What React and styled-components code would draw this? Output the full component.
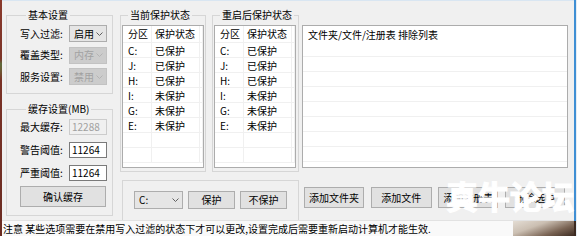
import React from 'react';
import styled, { createGlobalStyle } from 'styled-components';

const FONT = `"Noto Sans CJK SC", "Noto Sans", sans-serif`;

const GlobalStyle = createGlobalStyle`
  html, body {
    margin: 0;
    padding: 0;
    width: 577px;
    height: 236px;
    overflow: hidden;
    background: #f0f0f0;
  }
  body {
    font-family: ${FONT};
    font-size: 10px;
    color: #000;
  }
`;

const drives = [
  ['C:', '已保护'],
  ['J:', '已保护'],
  ['H:', '已保护'],
  ['I:', '未保护'],
  ['G:', '未保护'],
  ['E:', '未保护'],
];

function Chevron({ color }) {
  return (
    <svg width="7" height="4" viewBox="0 0 7 4">
      <polyline points="0.5,0.5 3.5,3.5 6.5,0.5" fill="none" stroke={color} strokeWidth="1" />
    </svg>
  );
}

function Select({ value, width, disabled, tall }) {
  return (
    <StyledSelect $w={width} $disabled={disabled} $tall={tall}>
      <span>{value}</span>
      <Chevron color={disabled ? '#b4b4b4' : '#606060'} />
    </StyledSelect>
  );
}

function DriveList() {
  return (
    <StyledListBox $h={143}>
      <StyledDriveGrid>
        <StyledCell $pl={5}>分区</StyledCell>
        <StyledCell $pl={3}>保护状态</StyledCell>
        <StyledCell />
        {drives.map(([d, s]) => (
          <React.Fragment key={d}>
            <StyledCell $pl={5}>{d}</StyledCell>
            <StyledCell $pl={3}>{s}</StyledCell>
            <StyledCell />
          </React.Fragment>
        ))}
        {[0, 1].map((i) => (
          <React.Fragment key={i}>
            <StyledCell />
            <StyledCell />
            <StyledCell />
          </React.Fragment>
        ))}
      </StyledDriveGrid>
    </StyledListBox>
  );
}

export default function App() {
  return (
    <>
      <GlobalStyle />
      <StyledScreen>
        <StyledDesktopEdge />
        <StyledWindow>
          <StyledBody>
            <StyledColumn $w={107}>
              <StyledGroup $h={85} $pad="4px 0 0 13px">
                <StyledLegend>基本设置</StyledLegend>
                <StyledFieldStack $gap={4.5}>
                  <StyledFieldRow>
                    <StyledLabel>写入过滤:</StyledLabel>
                    <Select value="启用" width={38} />
                  </StyledFieldRow>
                  <StyledFieldRow>
                    <StyledLabel>覆盖类型:</StyledLabel>
                    <Select value="内存" width={38} disabled />
                  </StyledFieldRow>
                  <StyledFieldRow>
                    <StyledLabel>服务设置:</StyledLabel>
                    <Select value="禁用" width={38} disabled />
                  </StyledFieldRow>
                </StyledFieldStack>
              </StyledGroup>

              <StyledGroup $h={113} $pad="4px 0 0 13px" $mt={9}>
                <StyledLegend>缓存设置(MB)</StyledLegend>
                <StyledFieldStack $gap={7}>
                  <StyledFieldRow $h={16}>
                    <StyledLabel>最大缓存:</StyledLabel>
                    <StyledNumber $disabled>12288</StyledNumber>
                  </StyledFieldRow>
                  <StyledFieldRow $h={16}>
                    <StyledLabel>警告阈值:</StyledLabel>
                    <StyledNumber>11264</StyledNumber>
                  </StyledFieldRow>
                  <StyledFieldRow $h={16}>
                    <StyledLabel>严重阈值:</StyledLabel>
                    <StyledNumber>11264</StyledNumber>
                  </StyledFieldRow>
                </StyledFieldStack>
                <StyledButton $w={86} $mt={5}>确认缓存</StyledButton>
              </StyledGroup>
            </StyledColumn>

            <StyledColumn $w={179} $ml={7}>
              <StyledPairRow>
                <StyledGroup $h={163} $w={86} $pad="4px 1px 0 1px">
                  <StyledLegend>当前保护状态</StyledLegend>
                  <DriveList />
                </StyledGroup>
                <StyledGroup $h={163} $w={87} $pad="4px 2px 0 1px">
                  <StyledLegend>重启后保护状态</StyledLegend>
                  <DriveList />
                </StyledGroup>
              </StyledPairRow>
              <StyledActionBox>
                <Select value="C:" width={49} tall />
                <StyledButton $w={47} $h={18}>保护</StyledButton>
                <StyledButton $w={47} $h={18}>不保护</StyledButton>
              </StyledActionBox>
            </StyledColumn>

            <StyledColumn $w={266} $ml={3}>
              <StyledListBox $h={143} $mt={16}>
                <StyledExcludeHeader>文件夹/文件/注册表 排除列表</StyledExcludeHeader>
                {[0, 1, 2, 3, 4, 5, 6].map((i) => (
                  <StyledExcludeRow key={i} />
                ))}
              </StyledListBox>
              <StyledButtonRow>
                <StyledButton $w={60}>添加文件夹</StyledButton>
                <StyledButton $w={61}>添加文件</StyledButton>
                <StyledButton $w={60}>添加注册表</StyledButton>
                <StyledButton $w={60}>删除选中</StyledButton>
              </StyledButtonRow>
            </StyledColumn>
          </StyledBody>

          <StyledStatusBar>
            <StyledStatusText>
              注意 某些选项需要在禁用写入过滤的状态下才可以更改,设置完成后需要重新启动计算机才能生效.
            </StyledStatusText>
            <StyledDesktopPeek />
          </StyledStatusBar>
        </StyledWindow>
        <StyledWindowBorder />
        <StyledWatermark>真牛论坛</StyledWatermark>
      </StyledScreen>
    </>
  );
}

const StyledScreen = styled.div`
  position: relative;
  display: flex;
  width: 577px;
  height: 236px;
  overflow: hidden;
`;

const StyledDesktopEdge = styled.div`
  width: 2px;
  flex-shrink: 0;
  background: linear-gradient(
    to bottom,
    #8a3a2c 0%,
    #7c3428 25%,
    #5f6b3c 27%,
    #6d5a34 30%,
    #7a3226 34%,
    #6a2c22 100%
  );
`;

const StyledWindow = styled.div`
  flex: 1;
  display: flex;
  flex-direction: column;
  border-top: 1px solid #d9e6f2;
  min-width: 0;
`;

const StyledBody = styled.div`
  flex: 1;
  display: flex;
  padding: 8px 6px 0 4px;
`;

const StyledColumn = styled.div`
  display: flex;
  flex-direction: column;
  width: ${(p) => p.$w}px;
  margin-left: ${(p) => p.$ml || 0}px;
  flex-shrink: 0;
`;

const StyledGroup = styled.fieldset`
  box-sizing: border-box;
  margin: ${(p) => p.$mt || 0}px 0 0 0;
  padding: ${(p) => p.$pad};
  height: ${(p) => p.$h}px;
  width: ${(p) => (p.$w ? `${p.$w}px` : 'auto')};
  min-width: 0;
  border: 1px solid #d6d6d6;
  border-radius: 0;
`;

const StyledLegend = styled.legend`
  padding: 0 2px;
  margin-left: 6px;
  font-size: 10px;
  line-height: 12px;
  color: #000;
  white-space: nowrap;
`;

const StyledFieldStack = styled.div`
  display: flex;
  flex-direction: column;
  gap: ${(p) => p.$gap}px;
`;

const StyledFieldRow = styled.div`
  display: grid;
  grid-template-columns: 49px 38px;
  align-items: center;
  height: ${(p) => p.$h || 17}px;
`;

const StyledLabel = styled.span`
  font-size: 10px;
  line-height: 12px;
  white-space: nowrap;
`;

const StyledSelect = styled.div`
  box-sizing: border-box;
  display: flex;
  align-items: center;
  justify-content: space-between;
  width: ${(p) => p.$w}px;
  height: ${(p) => (p.$tall ? 18 : 17)}px;
  padding: 0 3px 0 4px;
  border: 1px solid ${(p) => (p.$disabled ? '#c2c2c2' : '#adadad')};
  background: ${(p) => (p.$disabled ? '#cccccc' : '#e5e5e5')};
  color: ${(p) => (p.$disabled ? '#a2a2a2' : '#000')};
  font-size: 10px;
  line-height: 12px;
  white-space: nowrap;
  flex-shrink: 0;
`;

const StyledNumber = styled.div`
  box-sizing: border-box;
  width: 38px;
  height: 16px;
  padding-left: 2px;
  border: 1px solid ${(p) => (p.$disabled ? '#cccccc' : '#7a7a7a')};
  background: ${(p) => (p.$disabled ? '#f0f0f0' : '#ffffff')};
  color: ${(p) => (p.$disabled ? '#a0a0a0' : '#000')};
  font-size: 10px;
  line-height: 14px;
`;

const StyledButton = styled.div`
  box-sizing: border-box;
  display: flex;
  align-items: center;
  justify-content: center;
  width: ${(p) => p.$w}px;
  height: ${(p) => p.$h || 21}px;
  margin-top: ${(p) => p.$mt || 0}px;
  border: 1px solid #adadad;
  background: #e1e1e1;
  font-size: 10px;
  line-height: 12px;
  white-space: nowrap;
  flex-shrink: 0;
`;

const StyledPairRow = styled.div`
  display: flex;
  gap: 6px;
`;

const StyledListBox = styled.div`
  box-sizing: border-box;
  height: ${(p) => p.$h}px;
  margin-top: ${(p) => p.$mt || 0}px;
  background: #ffffff;
  border: 1px solid #acacac;
  overflow: hidden;
`;

const StyledDriveGrid = styled.div`
  display: grid;
  grid-template-columns: 29px 48px 1fr;
  grid-template-rows: 17px;
  grid-auto-rows: 15px;
`;

const StyledCell = styled.div`
  box-sizing: border-box;
  padding-left: ${(p) => p.$pl || 0}px;
  border-right: 1px solid #f0f0f0;
  border-bottom: 1px solid #f0f0f0;
  font-size: 10px;
  line-height: 15px;
  white-space: nowrap;
  overflow: hidden;
`;

const StyledExcludeHeader = styled.div`
  box-sizing: border-box;
  height: 31px;
  padding: 3px 0 0 5px;
  border-bottom: 1px solid #f0f0f0;
  font-size: 10px;
  line-height: 12px;
  white-space: nowrap;
`;

const StyledExcludeRow = styled.div`
  box-sizing: border-box;
  height: 15px;
  border-bottom: 1px solid #f0f0f0;
`;

const StyledActionBox = styled.div`
  box-sizing: border-box;
  display: flex;
  gap: 5px;
  height: 40px;
  margin: 8px 0 0 2px;
  padding: 10px 0 0 11px;
  border: 1px solid #d6d6d6;
  border-bottom: none;
`;

const StyledButtonRow = styled.div`
  display: flex;
  gap: 6.7px;
  margin-top: 19px;
  padding-left: 2px;
`;

const StyledStatusBar = styled.div`
  display: flex;
  height: 16px;
  background: #f9f9f9;
  border-top: 1px solid #e2e2e2;
`;

const StyledStatusText = styled.div`
  flex: 1;
  padding-left: 1px;
  font-size: 10px;
  line-height: 15px;
  white-space: nowrap;
  overflow: hidden;
`;

const StyledDesktopPeek = styled.div`
  width: 61px;
  flex-shrink: 0;
  background: linear-gradient(160deg, #e4ddd4 0%, #cbbfb2 35%, #7a6454 70%, #3e2c22 100%);
`;

const StyledWindowBorder = styled.div`
  width: 2px;
  flex-shrink: 0;
  border-right: 1px solid #e6edf4;
  background: linear-gradient(to bottom, #3f8fd4 0, #3f8fd4 221px, #3b2a20 221px);
`;

const StyledWatermark = styled.div`
  position: absolute;
  left: 446px;
  top: 179px;
  font-family: ${FONT};
  font-size: 32px;
  font-weight: 700;
  line-height: 1;
  color: #ffffff;
  -webkit-text-stroke: 1.2px #ffffff;
  white-space: nowrap;
  pointer-events: none;
`;
